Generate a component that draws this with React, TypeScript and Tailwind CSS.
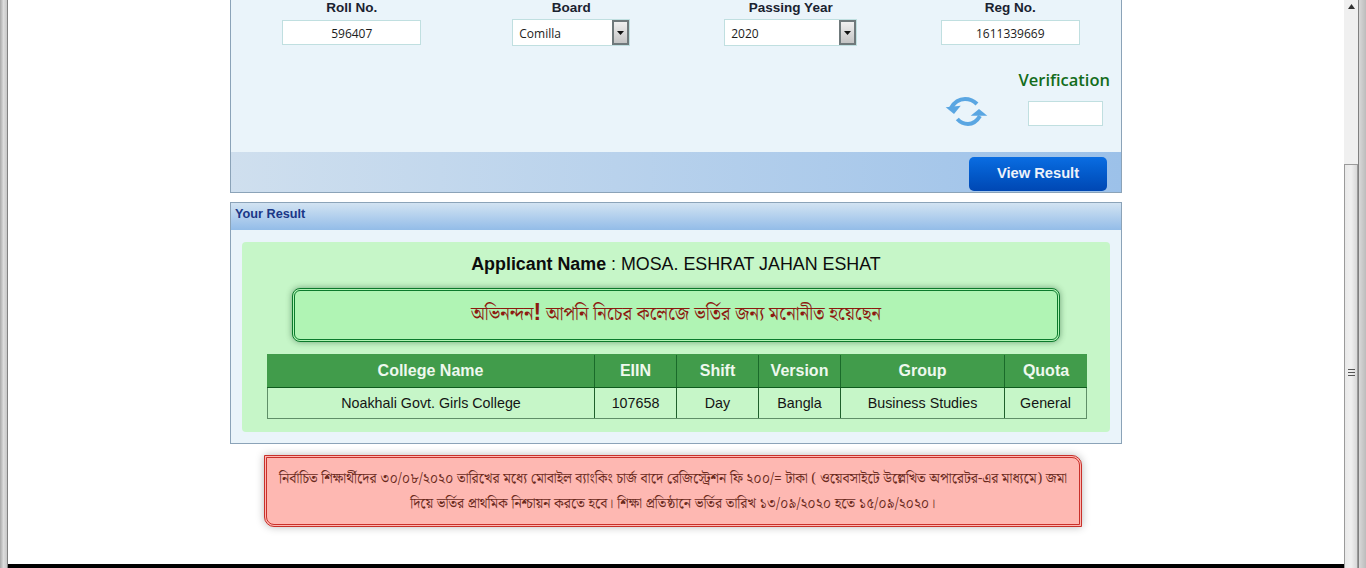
import React from "react";

const arial = "font-['Liberation_Sans',Arial,sans-serif]";
const bn = "font-['Noto_Serif_Bengali','Noto_Sans_Bengali','Lohit_Bengali','Noto_Sans',serif]";
const tahoma = "font-['Open_Sans',sans-serif]";

function Field({ label, value }: { label: string; value: string }) {
  return (
    <div className="flex flex-col items-center pt-[1px]">
      <div className={`${arial} text-[13.5px] leading-[14px] font-bold text-[#1a2230]`}>{label}</div>
      <div className={`${tahoma} mt-[5px] flex h-[25px] w-[139px] items-center justify-center border border-[#c0dfe0] bg-white pt-[2px] text-[12px] text-[#1c1c1c]`}>
        {value}
      </div>
    </div>
  );
}

function SelectBox({ label, value, width }: { label: string; value: string; width: string }) {
  return (
    <div className="flex flex-col items-center pt-[1px]">
      <div className={`${arial} text-[13.5px] leading-[14px] font-bold text-[#1a2230]`}>{label}</div>
      <div className={`mt-[4px] flex h-[27px] ${width} border border-[#c0dfe0] bg-white`}>
        <div className={`${tahoma} flex flex-1 items-center pl-[6px] pt-[2px] text-[12px] text-[#1c1c1c]`}>{value}</div>
        <div className="flex w-[17px] items-center justify-center border-2 border-[#6f797b] bg-gradient-to-b from-[#f0f0f0] to-[#c4c4c4]">
          <svg width="7" height="4" viewBox="0 0 7 4"><path d="M0 0h7L3.5 4z" fill="#111" /></svg>
        </div>
      </div>
    </div>
  );
}

function RefreshIcon() {
  return (
    <svg width="44" height="29" viewBox="0 0 44 29" fill="none">
      <path d="M6 11C10 4 15 2 20 2C25 2 29 4 32 7" stroke="#5aa6e2" strokeWidth="4" />
      <path d="M0.7 10.3L15.7 8.7L9 17z" fill="#5aa6e2" />
      <path d="M12.3 22C15 25 19 27 23 27C28 27 32 24 35 19" stroke="#5aa6e2" strokeWidth="4" />
      <path d="M25.7 18.7L42.3 18.7L34 12z" fill="#5aa6e2" />
    </svg>
  );
}

const headers = ["College Name", "EIIN", "Shift", "Version", "Group", "Quota"];
const cells = ["Noakhali Govt. Girls College", "107658", "Day", "Bangla", "Business Studies", "General"];

export default function App() {
  return (
    <div className="flex h-[568px] w-[1366px] overflow-hidden bg-white">
      <div className="w-[8px] shrink-0 border-r border-[#808080] bg-gradient-to-r from-[#a8a8a8] via-[#dcdcdc] to-[#c8c8c8]" />
      <div className="flex min-w-0 flex-1 flex-col">
        <main className="h-[564px] pl-[222px]">
          <section className="h-[193px] w-[892px] border-x border-b border-[#8ba3b8] bg-[#eaf4fa]">
            <div className="h-[152px]">
              <div className="grid grid-cols-4 pl-[11px] pr-[1px] pt-0">
                <Field label="Roll No." value="596407" />
                <SelectBox label="Board" value="Comilla" width="w-[118px]" />
                <SelectBox label="Passing Year" value="2020" width="w-[133px]" />
                <Field label="Reg No." value="1611339669" />
              </div>
              <div className="mt-[23px] flex items-end justify-end pr-[11px]">
                <RefreshIcon />
                <div className="ml-[29px] flex w-[92px] flex-col items-end">
                  <div className={`${tahoma} whitespace-nowrap text-[16.5px] leading-[22px] font-semibold text-[#136c1b]`}>Verification</div>
                  <div className="mr-[7px] mt-[10px] h-[25px] w-[75px] border border-[#c0dfe0] bg-white" />
                </div>
              </div>
            </div>
            <div className="flex h-[40px] items-start justify-end bg-gradient-to-r from-[#cfdfee] to-[#9cc1e9] pr-[14px] pt-[5px]">
              <button className={`${arial} h-[34px] w-[138px] rounded-[5px] bg-gradient-to-b from-[#0a6de2] to-[#0047b3] pb-[2px] text-[14.7px] font-bold text-[#eef2fa]`}>
                View Result
              </button>
            </div>
          </section>

          <section className="mt-[9px] h-[242px] w-[892px] border border-[#8ba3b8] bg-[#eaf4fa]">
            <div className={`${arial} h-[27px] bg-gradient-to-b from-[#d2e3f2] to-[#93bce8] pl-[4px] pt-[4px] text-[12.7px] leading-[15px] font-bold text-[#1a3787]`}>
              Your Result
            </div>
            <div className="px-[11px] pt-[12px]">
              <div className={`${arial} h-[190px] rounded-[4px] bg-[#c6f6c8] pt-[11px]`}>
                <div className="text-center text-[17.85px] leading-[22px] text-[#0c0c0c]">
                  <b>Applicant Name</b> : MOSA. ESHRAT JAHAN ESHAT
                </div>
                <div className={`${bn} mx-auto mt-[13px] flex h-[54px] w-[768px] items-center justify-center rounded-[8px] border-[3px] border-double border-[#0b7a2c] bg-[#b0f4b4] text-[18.3px] text-[#8c1a10] shadow-[0_0_6px_rgba(0,60,20,0.45)]`}>
                  <span>অভিনন্দন<b className="font-['Liberation_Sans',sans-serif] text-[23px] leading-none">!</b> আপনি নিচের কলেজে ভর্তির জন্য মনোনীত হয়েছেন</span>
                </div>
                <div className="ml-[25px] mt-[12px] w-[820px]">
                  <div className="grid h-[34px] grid-cols-[328px_82px_82px_82px_164px_82px] border-b border-[#0f5a1e] bg-[#419c4b] pt-[1px] text-[16px] font-bold text-[#eef8ee]">
                    {headers.map((h, i) => (
                      <div key={h} className={`flex items-center justify-center ${i < 5 ? "border-r border-[#1a6a2a]" : ""}`}>{h}</div>
                    ))}
                  </div>
                  <div className="grid h-[31px] grid-cols-[327px_82px_82px_82px_164px_81px] border-x border-b border-[#5f8f68] text-[14.3px] text-[#141414]">
                    {cells.map((c, i) => (
                      <div key={c} className={`flex items-center justify-center pt-[1px] ${i < 5 ? "border-r border-[#1f5f2c]" : ""}`}>{c}</div>
                    ))}
                  </div>
                </div>
              </div>
            </div>
          </section>

          <section className={`${bn} ml-[34px] mt-[11px] flex h-[72px] w-[818px] items-center justify-center rounded-bl-[10px] rounded-tr-[10px] border-[3px] border-double border-[#c9302a] bg-[#feb8b2] px-[8px] pt-[2px] text-center text-[13.9px] leading-[25px] text-[#6a2a1c] shadow-[0_0_8px_rgba(0,0,0,0.28)]`}>
            <span>নির্বাচিত শিক্ষার্থীদের ৩০/০৮/২০২০ তারিখের মধ্যে মোবাইল ব্যাংকিং চার্জ বাদে রেজিস্ট্রেশন ফি ২০০/= টাকা ( ওয়েবসাইটে উল্লেখিত অপারেটর-এর মাধ্যমে) জমা দিয়ে ভর্তির প্রাথমিক নিশ্চায়ন করতে হবে। শিক্ষা প্রতিষ্ঠানে ভর্তির তারিখ ১৩/০৯/২০২০ হতে ১৫/০৯/২০২০।</span>
          </section>
        </main>
        <div className="h-[4px] bg-black" />
      </div>
      <div className="flex w-[14px] shrink-0 flex-col">
        <div className="flex h-[164px] justify-center bg-[#f0f0f0] pt-[4px]">
          <svg width="7" height="5" viewBox="0 0 7 5"><path d="M3.5 0L7 5H0z" fill="#333" /></svg>
        </div>
        <div className="flex flex-1 items-center justify-center border-x border-t border-[#9a9a9a] bg-gradient-to-r from-[#e8e8e8] via-[#f0f0f0] to-[#d8d8d8] pt-[12px]">
          <svg width="7" height="7" viewBox="0 0 7 7"><path d="M0 .5h7M0 3.5h7M0 6.5h7" stroke="#555" /></svg>
        </div>
      </div>
      <div className="w-[8px] shrink-0 border-l border-[#808080] bg-gradient-to-r from-[#d8d8d8] to-[#bcbcbc]" />
    </div>
  );
}
